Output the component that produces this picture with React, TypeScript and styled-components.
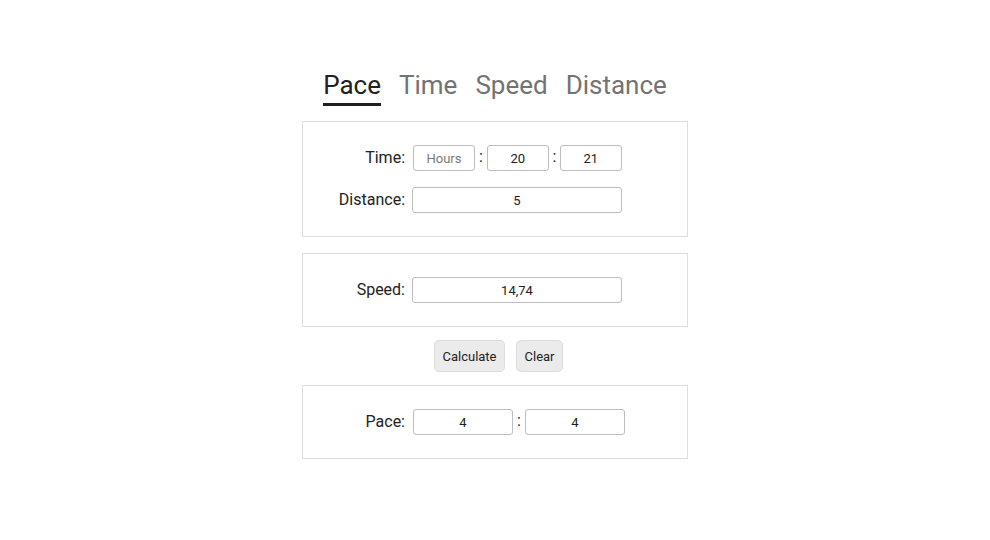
import React from "react";
import styled, { createGlobalStyle } from "styled-components";

const Global = createGlobalStyle`
  html, body { margin: 0; padding: 0; background: #fff; }
  body { font-family: Roboto, "Liberation Sans", sans-serif; color: #212121; }
  * { box-sizing: border-box; }
`;

const Page = styled.div`
  width: 990px;
  height: 540px;
  display: flex;
  flex-direction: column;
  align-items: center;
  padding-top: 69px;
`;

const Tabs = styled.nav`
  display: flex;
  gap: 18px;
  margin-bottom: 15px;
`;

const Tab = styled.div<{ $active?: boolean }>`
  font-size: 26px;
  line-height: 32px;
  color: ${(p) => (p.$active ? "#212121" : "#737373")};
  padding-bottom: 2px;
  border-bottom: 3px solid ${(p) => (p.$active ? "#212121" : "transparent")};
`;

const Card = styled.section`
  width: 386px;
  border: 1px solid #dedede;
  padding: 23px 0;
  display: grid;
  grid-template-columns: 102px auto;
  column-gap: 7px;
  row-gap: 16px;
  align-items: center;
  margin-bottom: 16px;
`;

const Label = styled.label`
  font-size: 16px;
  color: #212121;
  text-align: right;
  position: relative;
  top: -1px;
`;

const Fields = styled.div<{ $shift?: number }>`
  display: flex;
  align-items: center;
  padding-left: ${(p) => p.$shift ?? 0}px;
`;

const Input = styled.input<{ $w: number }>`
  width: ${(p) => p.$w}px;
  height: 26px;
  border: 1px solid #bdbdbd;
  border-radius: 3px;
  font-family: Roboto, "Liberation Sans", sans-serif;
  font-size: 13px;
  color: #212121;
  text-align: center;
  padding: 0;
  outline: none;
  background: #fff;
  &::placeholder { color: #7a7a7a; }
`;

const Colon = styled.span<{ $tight?: boolean }>`
  font-size: 16px;
  color: #212121;
  padding: 0 ${(p) => (p.$tight ? "3.5px" : "4px")};
  line-height: 26px;
  position: relative;
  top: -1px;
`;

const Buttons = styled.div`
  display: flex;
  gap: 11px;
  padding-left: 7px;
  margin: -3px 0 13px;
`;

const Button = styled.button`
  height: 32px;
  padding: 0 7.5px;
  font-family: Roboto, "Liberation Sans", sans-serif;
  font-size: 13px;
  color: #212121;
  background: #ebebeb;
  border: 1px solid #dcdcdc;
  border-radius: 5px;
`;

export default function App() {
  return (
    <>
      <Global />
      <Page>
        <Tabs>
          <Tab $active>Pace</Tab>
          <Tab>Time</Tab>
          <Tab>Speed</Tab>
          <Tab>Distance</Tab>
        </Tabs>
        <Card>
          <Label>Time:</Label>
          <Fields $shift={1}>
            <Input $w={62} placeholder="Hours" />
            <Colon>:</Colon>
            <Input $w={62} defaultValue="20" />
            <Colon $tight>:</Colon>
            <Input $w={62} defaultValue="21" />
          </Fields>
          <Label>Distance:</Label>
          <Fields>
            <Input $w={210} defaultValue="5" />
          </Fields>
        </Card>
        <Card>
          <Label>Speed:</Label>
          <Fields>
            <Input $w={210} defaultValue="14,74" />
          </Fields>
        </Card>
        <Buttons>
          <Button>Calculate</Button>
          <Button>Clear</Button>
        </Buttons>
        <Card>
          <Label>Pace:</Label>
          <Fields $shift={1}>
            <Input $w={100} defaultValue="4" />
            <Colon>:</Colon>
            <Input $w={100} defaultValue="4" />
          </Fields>
        </Card>
      </Page>
    </>
  );
}
